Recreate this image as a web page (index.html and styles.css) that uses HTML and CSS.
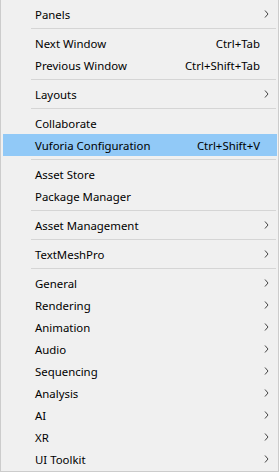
FILE: index.html
```html
<!DOCTYPE html>
<html lang="en">
<head>
    <meta charset="UTF-8">
    <meta name="viewport" content="width=device-width, initial-scale=1.0">
    <title>Window Menu</title>
    <link rel="stylesheet" href="styles.css">
</head>
<body>

<div class="menu">
    <div class="item sub"><span class="label">Panels</span><svg class="arrow" width="5" height="8" viewBox="0 0 5 8"><path d="M1 0.5 L4 4 L1 7.5"/></svg></div>
    <div class="sep"></div>
    <div class="item"><span class="label">Next Window</span><span class="key">Ctrl+Tab</span></div>
    <div class="item"><span class="label">Previous Window</span><span class="key">Ctrl+Shift+Tab</span></div>
    <div class="sep"></div>
    <div class="item sub"><span class="label">Layouts</span><svg class="arrow" width="5" height="8" viewBox="0 0 5 8"><path d="M1 0.5 L4 4 L1 7.5"/></svg></div>
    <div class="sep"></div>
    <div class="item"><span class="label">Collaborate</span></div>
    <div class="item active"><span class="label">Vuforia Configuration</span><span class="key">Ctrl+Shift+V</span></div>
    <div class="sep"></div>
    <div class="item"><span class="label">Asset Store</span></div>
    <div class="item"><span class="label">Package Manager</span></div>
    <div class="sep"></div>
    <div class="item sub"><span class="label">Asset Management</span><svg class="arrow" width="5" height="8" viewBox="0 0 5 8"><path d="M1 0.5 L4 4 L1 7.5"/></svg></div>
    <div class="sep"></div>
    <div class="item sub"><span class="label">TextMeshPro</span><svg class="arrow" width="5" height="8" viewBox="0 0 5 8"><path d="M1 0.5 L4 4 L1 7.5"/></svg></div>
    <div class="sep"></div>
    <div class="item sub"><span class="label">General</span><svg class="arrow" width="5" height="8" viewBox="0 0 5 8"><path d="M1 0.5 L4 4 L1 7.5"/></svg></div>
    <div class="item sub"><span class="label">Rendering</span><svg class="arrow" width="5" height="8" viewBox="0 0 5 8"><path d="M1 0.5 L4 4 L1 7.5"/></svg></div>
    <div class="item sub"><span class="label">Animation</span><svg class="arrow" width="5" height="8" viewBox="0 0 5 8"><path d="M1 0.5 L4 4 L1 7.5"/></svg></div>
    <div class="item sub"><span class="label">Audio</span><svg class="arrow" width="5" height="8" viewBox="0 0 5 8"><path d="M1 0.5 L4 4 L1 7.5"/></svg></div>
    <div class="item sub"><span class="label">Sequencing</span><svg class="arrow" width="5" height="8" viewBox="0 0 5 8"><path d="M1 0.5 L4 4 L1 7.5"/></svg></div>
    <div class="item sub"><span class="label">Analysis</span><svg class="arrow" width="5" height="8" viewBox="0 0 5 8"><path d="M1 0.5 L4 4 L1 7.5"/></svg></div>
    <div class="item sub"><span class="label">AI</span><svg class="arrow" width="5" height="8" viewBox="0 0 5 8"><path d="M1 0.5 L4 4 L1 7.5"/></svg></div>
    <div class="item sub"><span class="label">XR</span><svg class="arrow" width="5" height="8" viewBox="0 0 5 8"><path d="M1 0.5 L4 4 L1 7.5"/></svg></div>
    <div class="item sub"><span class="label">UI Toolkit</span><svg class="arrow" width="5" height="8" viewBox="0 0 5 8"><path d="M1 0.5 L4 4 L1 7.5"/></svg></div>
</div>

</body>
</html>
```

FILE: styles.css
```css
body {
    margin: 0;
    background-color: #fff;
    font-family: 'Segoe UI', 'Noto Sans', sans-serif;
    font-size: 11.4px;
    color: #000;
}

.menu {
    width: 277px;
    padding: 3px 0 1px 0;
    background-color: #f0f0f0;
    border: 1px solid #cccccc;
    border-top: none;
}

.item {
    display: flex;
    align-items: center;
    height: 22px;
    margin: 0 1px 0 2px;
    padding: 0 17px 0 32px;
}

.item.sub {
    padding-right: 8px;
}

.item.active {
    background-color: #91c9f7;
}

.label {
    flex: 1;
    white-space: nowrap;
}

.key {
    white-space: nowrap;
}

.arrow path {
    fill: none;
    stroke: #444;
    stroke-width: 1;
}

.sep {
    height: 1px;
    margin: 3px 2px 3px 30px;
    background-color: #d5d5d5;
}
```
